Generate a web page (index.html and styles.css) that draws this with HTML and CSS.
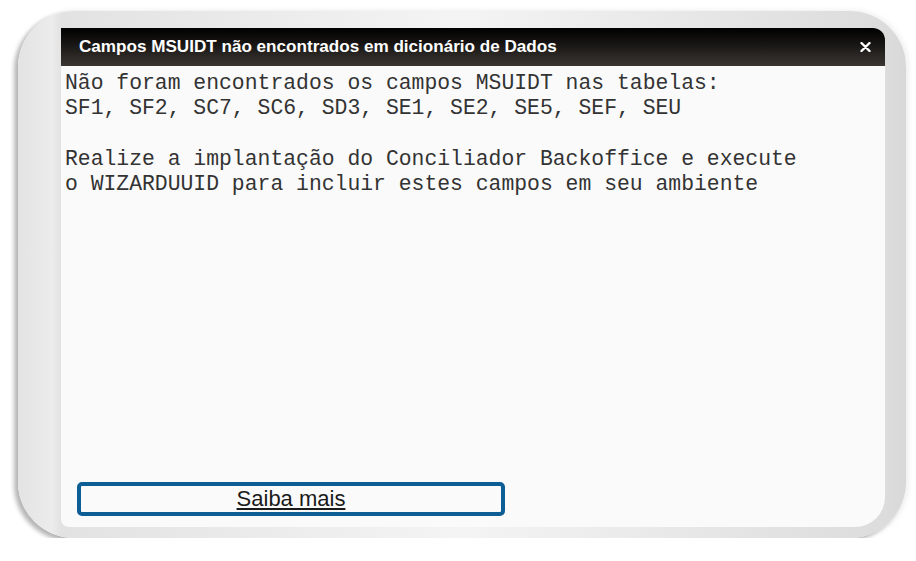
FILE: index.html
```html
<!doctype html>
<html lang="pt-BR">
  <head>
    <meta charset="UTF-8" />
    <meta name="viewport" content="width=device-width, initial-scale=1.0" />
    <title>Campos MSUIDT</title>
    <link rel="stylesheet" href="styles.css">
  </head>
  <body>
    <div class="frame">
      <div class="dialog">
        <div class="dialog-title">
          <span>Campos MSUIDT não encontrados em dicionário de Dados</span>
          <svg class="close" width="11" height="10" viewBox="0 0 11 10">
            <path d="M1.5 1 L9.5 9 M9.5 1 L1.5 9" stroke="#fff" stroke-width="2.4" stroke-linecap="round" />
          </svg>
        </div>
        <div class="dialog-body">
          <pre class="message">Não foram encontrados os campos MSUIDT nas tabelas:
SF1, SF2, SC7, SC6, SD3, SE1, SE2, SE5, SEF, SEU

Realize a implantação do Conciliador Backoffice e execute
o WIZARDUUID para incluir estes campos em seu ambiente</pre>
          <a class="more" href="#">Saiba mais</a>
        </div>
      </div>
    </div>
  </body>
</html>
```

FILE: styles.css
```css
html,
body {
  margin: 0;
  background: #fff;
}
.frame {
  margin: 11px 10px 0 18px;
  height: 527px;
  box-sizing: border-box;
  padding: 17px 21px 11px 43px;
  border-radius: 56px;
  background: linear-gradient(90deg, #e3e3e3 0, #ececec 34px, #e2e2e2 43px, #f4f4f4 50%, #dcdcdc 867px, #d8d8d8 100%);
  box-shadow: -4px 3px 4px rgba(0, 0, 0, 0.28), 2px 0 6px rgba(0, 0, 0, 0.08);
  overflow: hidden;
}
.dialog {
  height: 100%;
  display: flex;
  flex-direction: column;
  background: #fafafa;
  border-radius: 0 12px 30px 8px;
  overflow: hidden;
}
.dialog-title {
  height: 38px;
  flex: none;
  display: flex;
  align-items: center;
  justify-content: space-between;
  padding: 0 14px 0 18px;
  background: linear-gradient(#000 0, #1c1a18 50%, #3b3632 100%);
  color: #fff;
  font-family: "Liberation Sans", Arial, sans-serif;
  font-weight: bold;
  font-size: 17.1px;
}
.close {
  display: block;
}
.dialog-body {
  flex: 1;
  display: flex;
  flex-direction: column;
  justify-content: space-between;
  padding: 5px 0 11px 4px;
}
.message {
  margin: 0;
  font-family: "Liberation Mono", "Courier New", monospace;
  font-size: 21.4px;
  line-height: 25.3px;
  color: #333;
}
.more {
  margin-left: 12px;
  width: 428px;
  height: 34px;
  box-sizing: border-box;
  border: 4px solid #0d5e95;
  border-radius: 5px;
  display: flex;
  align-items: center;
  justify-content: center;
  font-family: "Liberation Sans", Arial, sans-serif;
  font-size: 22px;
  color: #1a1a1a;
}
```
